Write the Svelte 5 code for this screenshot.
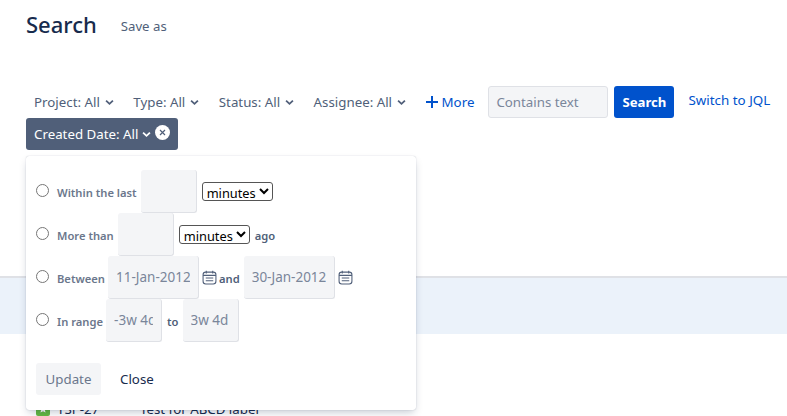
<script lang="ts">
  const filters = ["Project: All", "Type: All", "Status: All", "Assignee: All"];
</script>

<main class="page">
  <header class="head">
    <h1>Search</h1>
    <span class="save">Save as</span>
  </header>

  <div class="filters">
    {#each filters as f}
      <button class="crit">{f}<svg class="chev" viewBox="0 0 10 7"><path d="M1.2 1.4 5 5l3.8-3.6" /></svg></button>
    {/each}
    <button class="more"><svg viewBox="0 0 12 12"><path d="M6 0v12M0 6h12" /></svg>More</button>
    <input class="text" placeholder="Contains text" />
    <button class="go">Search</button>
    <span class="jql">Switch to JQL</span>
  </div>

  <div class="active-row">
    <div class="active">
      Created Date: All
      <svg class="chev" viewBox="0 0 10 7"><path d="M1.2 1.4 5 5l3.8-3.6" /></svg>
      <svg class="clear" viewBox="0 0 15 15"><circle cx="7.5" cy="7.5" r="7.5" /><path d="m5 5 5 5m0-5-5 5" /></svg>
    </div>
    <div class="pop">
      <div class="row">
        <input type="radio" name="d" /><label for="">Within the last</label>
        <input class="box" />
        <select><option>minutes</option></select>
      </div>
      <div class="row">
        <input type="radio" name="d" /><label for="">More than</label>
        <input class="box" />
        <select><option>minutes</option></select>
        <span class="lbl">ago</span>
      </div>
      <div class="row">
        <input type="radio" name="d" /><label class="tight" for="">Between</label>
        <input class="box date" value="11-Jan-2012" />
        <svg class="cal" viewBox="0 0 14 14"><rect x="1" y="2" width="12" height="11" rx="2.5" /><path d="M1 5h12M4 .8v2.4M10 .8v2.4M3.5 7.5h7M3.5 10h7" /></svg>
        <span class="lbl">and</span>
        <input class="box date" value="30-Jan-2012" />
        <svg class="cal" viewBox="0 0 14 14"><rect x="1" y="2" width="12" height="11" rx="2.5" /><path d="M1 5h12M4 .8v2.4M10 .8v2.4M3.5 7.5h7M3.5 10h7" /></svg>
      </div>
      <div class="row">
        <input type="radio" name="d" /><label class="tight" for="">In range</label>
        <input class="box" value="-3w 4d" />
        <span class="lbl">to</span>
        <input class="box" value="3w 4d" />
      </div>
      <div class="actions">
        <button class="update">Update</button>
        <button class="close">Close</button>
      </div>
    </div>
  </div>

  <section class="results">
    <div class="selected"></div>
    <div class="issue">
      <span class="type"><svg viewBox="0 0 14 14"><rect width="14" height="14" rx="2" /><path d="m7 3 1.2 2.6 2.8.3-2.1 1.9.6 2.8L7 9.2l-2.5 1.4.6-2.8L3 5.9l2.8-.3z" /></svg></span>
      <span class="key">TSP-27</span>
      <span class="sum">Test for ABCD label</span>
    </div>
  </section>
</main>

<style>
  :global(body) { margin: 0; background: #fff; overflow: hidden; }
  .page { height: 416px; overflow: hidden; font-family: "Noto Sans", "Open Sans", sans-serif; font-size: 13.3px; color: #172b4d; }
  button { font-family: inherit; font-size: 13.3px; border: 0; background: none; padding: 0; }

  .head { display: flex; align-items: flex-start; gap: 24px; padding: 7px 0 0 26px; height: 78px; box-sizing: border-box; }
  h1 { margin: 0; font-size: 22px; font-weight: 500; line-height: 34px; }
  .save { margin-top: 10px; color: #505f79; font-size: 13.2px; }

  .filters { display: flex; align-items: center; height: 32px; padding-left: 34px; margin-top: 8px; }
  .crit { display: flex; align-items: center; gap: 5px; color: #505f79; margin-right: 19.5px; }
  .chev { width: 9px; height: 7px; fill: none; stroke: currentColor; stroke-width: 2; }
  .more { display: flex; align-items: center; gap: 4px; color: #0052cc; }
  .more svg { width: 12px; height: 12px; stroke: #0052cc; stroke-width: 2; }
  .text { width: 120px; height: 32px; box-sizing: border-box; margin-left: 14px; padding: 0 7px; border: 1px solid #dfe1e6; border-radius: 3px; background: #f4f5f7; font: inherit; }
  .text::placeholder, .box { color: #7a869a; }
  .go { width: 60px; height: 32px; margin-left: 6px; border-radius: 3px; background: #0052cc; color: #fff; font-weight: 700; font-size: 13.2px; }
  .jql { margin-left: 14px; margin-top: -4px; color: #0052cc; font-size: 13.4px; }

  .active-row { position: relative; height: 32px; margin-left: 26px; }
  .active { display: inline-flex; align-items: center; gap: 4px; width: 152px; height: 32px; box-sizing: border-box; padding-left: 8px; border-radius: 3px; background: #505f79; color: #fff; }
  .clear { width: 15px; height: 15px; margin-bottom: 3px; }
  .clear circle { fill: #fff; }
  .clear path { fill: none; stroke: #505f79; stroke-width: 1.2; }

  .pop { position: absolute; z-index: 2; top: 38px; left: 0; width: 390px; height: 254px; box-sizing: border-box; padding: 14px 10px 0; border-radius: 3px; background: #fff; box-shadow: 0 4px 8px -2px rgba(9, 30, 66, 0.25), 0 0 1px rgba(9, 30, 66, 0.31); }
  .row { display: flex; align-items: center; height: 43px; color: #505f79; font-size: 11.2px; font-weight: 600; }
  .row input[type="radio"] { width: 13px; height: 13px; margin: 0 8px 3px 0; }
  .row label { margin: 2px 4px 0 0; color: #6b778c; white-space: nowrap; }
  .row label.tight { margin-right: 3px; }
  .lbl { margin-top: 2px; white-space: nowrap; }
  .box { width: 56px; height: 43px; box-sizing: border-box; padding: 0 8px; border: 0; border-bottom: 1px solid #dfe1e6; border-right: 1px solid #dfe1e6; border-radius: 3px; background: #f4f5f7; font: 400 13.5px "Noto Sans", sans-serif; }
  .date { width: 91px; }
  select { width: 71px; height: 19px; padding: 0; margin-left: 5px; margin-right: 5px; font: 400 12.8px/15px "Noto Sans", sans-serif; color: #000; background: #fff; border: 1px solid #555; border-radius: 3px; }
  .cal { width: 15px; height: 15px; margin: 0 2px 0 3px; fill: none; stroke: #505f79; stroke-width: 1; }
  .row:nth-child(3) .lbl { margin-right: 4px; }
  .row:nth-child(4) .lbl { margin: 2px 4px 0 5px; }

  .actions { display: flex; align-items: center; margin-top: 21px; }
  .update { width: 65px; height: 32px; border-radius: 3px; background: #f4f5f7; color: #6b778c; }
  .close { margin-left: 19px; color: #172b4d; }

  .results { margin-top: 126px; border-top: 2px solid #dfe1e6; }
  .selected { height: 56px; background: #ebf2fa; }
  .issue { display: flex; align-items: center; gap: 7px; margin-top: 66px; padding-left: 36px; }
  .type svg { display: block; width: 14px; height: 14px; }
  .type rect { fill: #65ba43; }
  .type path { fill: #fff; }
  .key { width: 76px; }
</style>
